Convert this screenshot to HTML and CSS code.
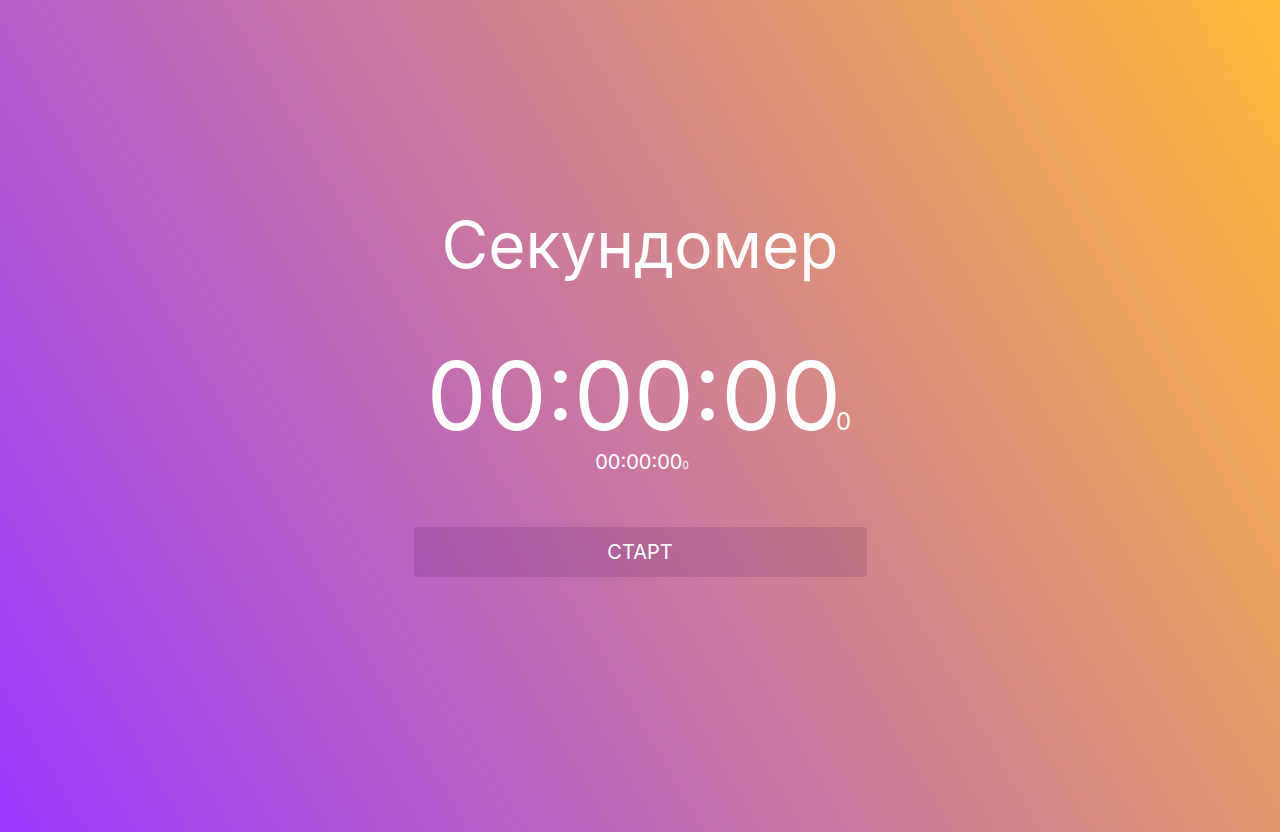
FILE: index.html
```html
<!DOCTYPE html>
<html lang="ru">
<head>
<meta charset="utf-8">
<title>Секундомер</title>
<link rel="stylesheet" href="styles.css">
</head>
<body>
<main class="app">
  <h1 class="title">Секундомер</h1>
  <div class="clock">
    <div class="time">00:00:00<span class="ms">0</span></div>
    <div class="lap">00:00:00<span class="lap-ms">0</span></div>
  </div>
  <button class="start">СТАРТ</button>
</main>
</body>
</html>
```
FILE: styles.css
```css
html, body {
  margin: 0;
  height: 100%;
}
body {
  background: linear-gradient(60deg, #9a3aff, #fdbb39);
  font-family: Inter, "Noto Sans", sans-serif;
  color: #fff;
}
.app {
  box-sizing: border-box;
  height: 100%;
  padding-top: 213px;
  display: flex;
  flex-direction: column;
  align-items: center;
}
.title {
  margin: 0;
  font-size: 64px;
  font-weight: 400;
  line-height: 1;
}
.clock {
  margin-top: 71px;
  display: flex;
  flex-direction: column;
  align-items: center;
}
.time {
  font-size: 95px;
  font-weight: 400;
  line-height: 1;
  padding-right: 2px;
}
.ms {
  font-size: 24px;
  margin-left: -5px;
}
.lap {
  margin-top: 9px;
  font-size: 20px;
  line-height: 1;
  padding-left: 4px;
}
.lap-ms {
  font-size: 10px;
}
.start {
  margin-top: 55px;
  width: 453px;
  height: 50px;
  border: none;
  border-radius: 4px;
  background: rgba(60, 10, 80, 0.14);
  color: #fff;
  font-family: Inter, "Noto Sans", sans-serif;
  font-size: 20px;
}
```
